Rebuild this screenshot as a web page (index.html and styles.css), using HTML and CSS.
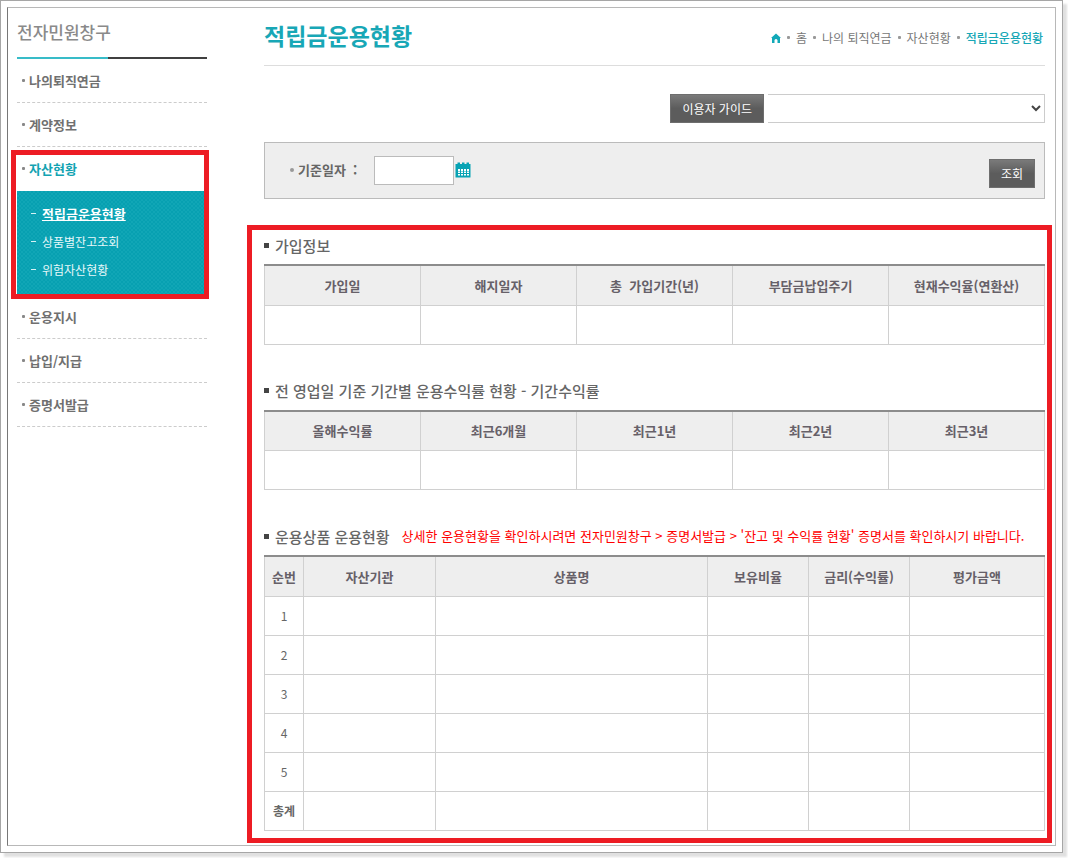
FILE: index.html
```html
<!DOCTYPE html>
<html lang="ko">
<head>
  <meta charset="UTF-8" />
  <meta name="viewport" content="width=device-width, initial-scale=1.0"/>
  <title>적립금운용현황</title>
  <link rel="stylesheet" href="styles.css">
</head>
<body>
  <div class="page">
    <div class="frame">
      <aside class="sidebar">
        <h2 class="sidebar-title">전자민원창구</h2>
        <ul class="menu">
          <li><a href="#">나의퇴직연금</a></li>
          <li><a href="#">계약정보</a></li>
          <li class="active">
            <a href="#">자산현황</a>
            <ul class="submenu">
              <li class="current"><a href="#">적립금운용현황</a></li>
              <li><a href="#">상품별잔고조회</a></li>
              <li><a href="#">위험자산현황</a></li>
            </ul>
          </li>
          <li><a href="#">운용지시</a></li>
          <li><a href="#">납입/지급</a></li>
          <li><a href="#">증명서발급</a></li>
        </ul>
      </aside>

      <main class="content">
        <header class="page-header">
          <h1>적립금운용현황</h1>
          <nav class="breadcrumb">
            <svg class="home-icon" viewBox="0 0 10 10" width="10" height="10">
              <path d="M5 0.5 L10 5 H9 V10 H6.5 V7 Q5 5.2 3.5 7 V10 H1 V5 H0 Z" fill="#12a9b8"/>
            </svg>
            <a href="#">홈</a>
            <a href="#">나의 퇴직연금</a>
            <a href="#">자산현황</a>
            <a href="#" class="here">적립금운용현황</a>
          </nav>
        </header>

        <div class="guide">
          <button type="button" class="btn">이용자 가이드</button>
          <select class="guide-select" aria-label="이용자 가이드">
            <option></option>
          </select>
        </div>

        <form class="search">
          <label for="baseDate">기준일자 &nbsp;:</label>
          <input type="text" id="baseDate" />
          <button type="button" class="calendar" aria-label="달력">
            <svg viewBox="0 0 16 16" width="16" height="16">
              <path d="M0.5 2 H2.5 V0.5 H5 V2 H7 V0.5 H9.5 V2 H11.5 V0.5 H14 V2 H15.5 V15 Q15.5 15.5 15 15.5 H1 Q0.5 15.5 0.5 15 Z" fill="#08a3b4"/>
              <path d="M3 7h2v2H3zM6 7h2v2H6zM9 7h2v2H9zM12 7h2v2h-2zM3 9.500h2v1.500H3zM6 9.500h2v1.500H6zM9 9.500h2v1.500H9zM12 9.500h2v1.500h-2zM3 12h2v1.500H3zM6 12h2v1.500H6zM9 12h2v1.500H9zM12 12h2v1.500h-2z" fill="#fff"/>
            </svg>
          </button>
          <button type="button" class="btn btn-search">조회</button>
        </form>

        <div class="results">
          <!-- 가입정보 -->
          <section>
            <h3 id="joinInfo">가입정보</h3>
            <table aria-labelledby="joinInfo">
              <thead>
                <tr>
                  <th>가입일</th>
                  <th>해지일자</th>
                  <th>총 &nbsp;가입기간(년)</th>
                  <th>부담금납입주기</th>
                  <th>현재수익율(연환산)</th>
                </tr>
              </thead>
              <tbody>
                <tr><td></td><td></td><td></td><td></td><td></td></tr>
              </tbody>
            </table>
          </section>

          <!-- 기간수익률 -->
          <section>
            <h3 id="periodRate">전 영업일 기준 기간별 운용수익률 현황 - 기간수익률</h3>
            <table aria-labelledby="periodRate">
              <thead>
                <tr>
                  <th>올해수익률</th>
                  <th>최근6개월</th>
                  <th>최근1년</th>
                  <th>최근2년</th>
                  <th>최근3년</th>
                </tr>
              </thead>
              <tbody>
                <tr><td></td><td></td><td></td><td></td><td></td></tr>
              </tbody>
            </table>
          </section>

          <!-- 운용상품 -->
          <section>
            <div class="section-head">
              <h3 id="products">운용상품 운용현황</h3>
              <p class="notice">상세한 운용현황을 확인하시려면 전자민원창구 &gt; 증명서발급 &gt; '잔고 및 수익률 현황' 증명서를 확인하시기 바랍니다.</p>
            </div>
            <table class="products" aria-labelledby="products">
              <colgroup>
                <col class="col-no">
                <col class="col-org">
                <col>
                <col class="col-rate">
                <col class="col-rate">
                <col class="col-amount">
              </colgroup>
              <thead>
                <tr>
                  <th>순번</th>
                  <th>자산기관</th>
                  <th>상품명</th>
                  <th>보유비율</th>
                  <th>금리(수익률)</th>
                  <th>평가금액</th>
                </tr>
              </thead>
              <tbody>
                <tr><td>1</td><td></td><td></td><td></td><td></td><td></td></tr>
                <tr><td>2</td><td></td><td></td><td></td><td></td><td></td></tr>
                <tr><td>3</td><td></td><td></td><td></td><td></td><td></td></tr>
                <tr><td>4</td><td></td><td></td><td></td><td></td><td></td></tr>
                <tr><td>5</td><td></td><td></td><td></td><td></td><td></td></tr>
                <tr class="total"><td>총계</td><td></td><td></td><td></td><td></td><td></td></tr>
              </tbody>
            </table>
          </section>
        </div>
      </main>
    </div>
  </div>
</body>
</html>
```

FILE: styles.css
```css
* {
  box-sizing: border-box;
}
body {
  margin: 0;
  background: #fff;
  color: #666;
  font-family: "Noto Sans CJK KR", sans-serif;
  font-size: 12px;
}
h1, h2, h3, p, ul {
  margin: 0;
  padding: 0;
}
ul {
  list-style: none;
}
a {
  color: inherit;
  text-decoration: none;
}
button, input, select {
  font-family: inherit;
  font-size: 12px;
}
.page {
  margin: 0 5px 5px 0;
  padding: 6px;
  border: 1px solid #a6a6a6;
  background: #fff;
  box-shadow: 4px 4px 2px #e0e0e0;
}
.frame {
  display: flex;
  gap: 57px;
  padding: 0 10px 2px 9px;
  border: 1px solid #b8b8b8;
  border-left-color: #777;
}

/* sidebar */
.sidebar {
  flex: none;
  width: 190px;
}
.sidebar-title {
  height: 51px;
  border-bottom: 2px solid;
  border-image: linear-gradient(to right, #38bcc8 48%, #404040 48%) 1;
  color: #8a8a8a;
  font-size: 17px;
  font-weight: 500;
  line-height: 48px;
}
.menu > li {
  border-bottom: 1px dashed #ccc;
}
.menu > li > a {
  display: flex;
  align-items: center;
  gap: 4px;
  height: 43px;
  padding-left: 5px;
  color: #707070;
  font-size: 13px;
  font-weight: bold;
}
.menu > li > a::before {
  content: "";
  width: 3px;
  height: 3px;
  border-radius: 1px;
  background: #888;
}
.menu > li.active {
  position: relative;
  border-bottom: none;
}
.menu > li.active > a {
  height: 44px;
  padding-bottom: 2px;
  color: #12a3b2;
}
.menu > li.active::after {
  content: "";
  position: absolute;
  top: 3px;
  right: -2px;
  bottom: -4px;
  left: -6px;
  border: 5px solid #ed1c24;
  pointer-events: none;
}
.submenu {
  padding: 8px 14px 12px;
  background: repeating-conic-gradient(#07a0b1 0 25%, #10a6b6 0 50%) 0 0 / 4px 4px;
  color: #e8f8fa;
}
.submenu li {
  display: flex;
  align-items: center;
  gap: 6px;
  height: 28px;
}
.submenu li::before {
  content: "";
  width: 5px;
  height: 1px;
  background: #d5f2f5;
}
.submenu .current a {
  color: #fff;
  font-size: 13px;
  font-weight: bold;
  text-decoration: underline;
}

/* content */
.content {
  flex: 1;
  min-width: 0;
}
.page-header {
  display: flex;
  justify-content: space-between;
  align-items: center;
  height: 58px;
  border-bottom: 1px solid #ddd;
}
h1 {
  padding-bottom: 4px;
  color: #18a7b6;
  font-size: 23px;
  font-weight: bold;
  line-height: 48px;
}
.breadcrumb {
  display: flex;
  align-items: center;
  gap: 6px;
  padding: 2px 2px 0 0;
  color: #777;
}
.breadcrumb a {
  display: flex;
  align-items: center;
  gap: 6px;
}
.breadcrumb a::before {
  content: "";
  width: 3px;
  height: 3px;
  border-radius: 1px;
  background: #999;
}
.breadcrumb .here {
  color: #18a7b6;
  font-weight: 500;
}
.guide {
  display: flex;
  justify-content: flex-end;
  gap: 4px;
  margin: 28px 0 19px;
}
.btn {
  height: 29px;
  padding: 0 11px;
  border: 1px solid #6e6e6e;
  background: linear-gradient(#7a7a7a, #5c5c5c 50%);
  color: #fff;
  line-height: 25px;
}
.guide-select {
  width: 277px;
  height: 29px;
  border: 1px solid #ccc;
  border-left: none;
  border-radius: 0;
  background: #fff;
  color: #444;
}
.search {
  display: flex;
  align-items: center;
  height: 57px;
  padding: 0 9px 0 25px;
  border: 1px solid #bbb;
  background: #eee;
}
.search label {
  display: flex;
  align-items: center;
  gap: 4px;
  width: 84px;
  padding-bottom: 2px;
  color: #666;
  font-size: 13px;
  font-weight: bold;
}
.search label::before {
  content: "";
  width: 4px;
  height: 4px;
  border-radius: 2px;
  background: #999;
}
.search input {
  width: 80px;
  height: 29px;
  border: 1px solid #bbb;
  background: #fff;
}
.calendar {
  display: flex;
  margin-left: 1px;
  padding: 0 0 2px;
  border: none;
  background: none;
}
.btn-search {
  margin: 6px 0 0 auto;
}

/* highlighted tables */
.results {
  margin: 26px -7px 0 -17px;
  padding: 0 2px 7px 12px;
  border: 5px solid #ed1c24;
}
.results section + section {
  margin-top: 31px;
}
.section-head {
  display: flex;
  gap: 12px;
}
h3 {
  display: flex;
  align-items: center;
  gap: 6px;
  height: 34px;
  padding-bottom: 4px;
  color: #666;
  font-size: 15px;
  font-weight: 500;
}
h3::before {
  content: "";
  width: 5px;
  height: 5px;
  background: #444;
}
.notice {
  color: #f00;
  font-size: 13px;
  line-height: 30px;
  white-space: nowrap;
}
table {
  width: 100%;
  border-collapse: collapse;
  border-top: 2px solid #8c8c8c;
  table-layout: fixed;
}
th, td {
  height: 39px;
  padding: 0;
  border: 1px solid #d0d0d0;
  text-align: center;
}
th {
  height: 40px;
  border-top: 2px solid #8c8c8c;
  background: #eee;
  color: #666068;
  font-size: 13px;
  font-weight: bold;
}
.total td {
  font-weight: bold;
}
.col-no {
  width: 39px;
}
.col-org {
  width: 132px;
}
.col-rate {
  width: 101px;
}
.col-amount {
  width: 135px;
}
```
